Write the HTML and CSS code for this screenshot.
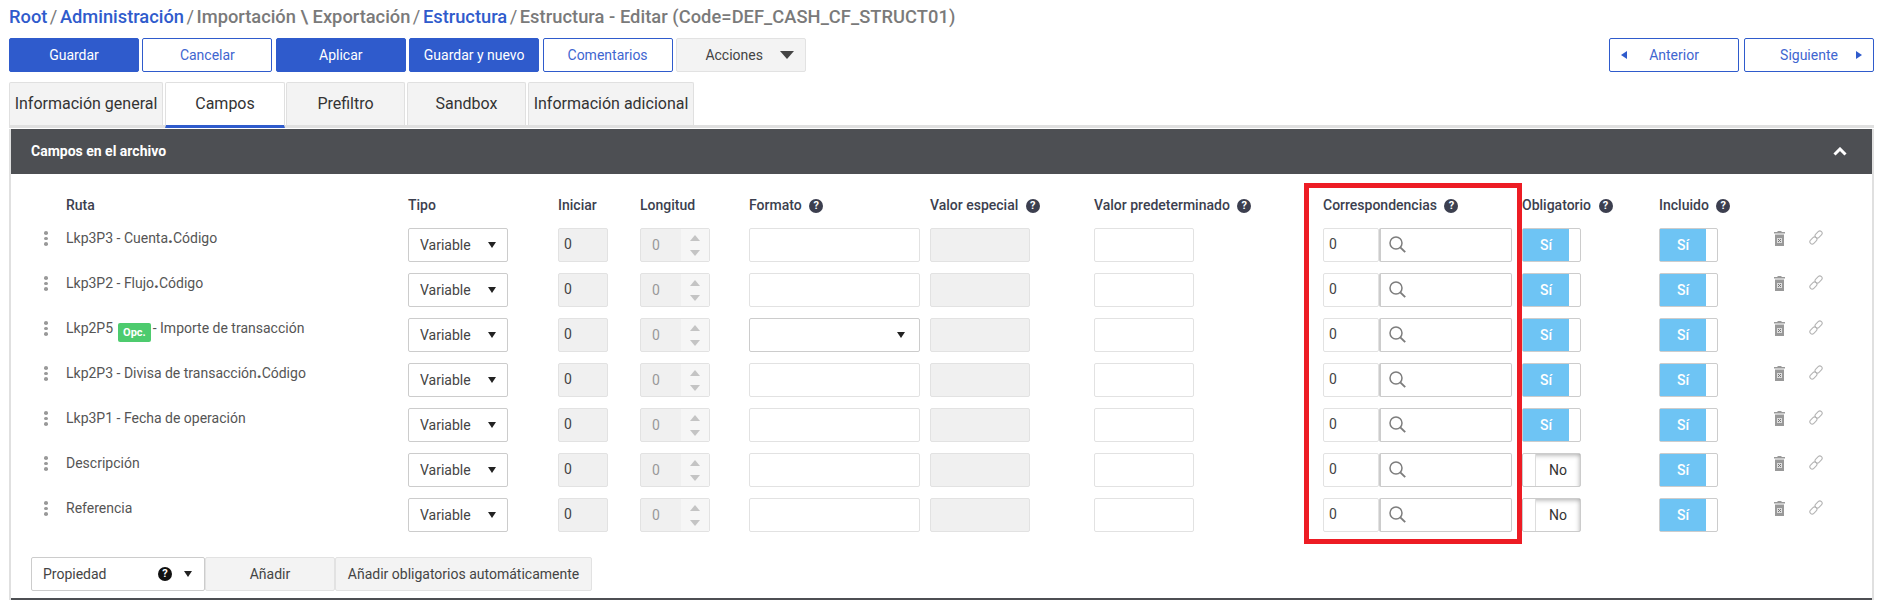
FILE: index.html
```html
<!DOCTYPE html>
<html lang="es">
<head>
    <meta charset="UTF-8">
    <title>Estructura - Editar</title>
    <link rel="stylesheet" href="styles.css">
</head>
<body>
    <svg class="defs" width="0" height="0">
        <symbol id="i-search" viewBox="0 0 17 17">
            <circle cx="7" cy="7" r="6" fill="none" stroke="#7d7d7d" stroke-width="1.5"/>
            <path d="M11.3 11.3 L16.2 16.2" stroke="#7d7d7d" stroke-width="1.9" fill="none"/>
        </symbol>
        <symbol id="i-trash" viewBox="0 0 11 15">
            <path d="M3.5 0h4v1h3.5v1.5h-11v-1.5h3.5z" fill="#999"/>
            <path d="M1 3.5h9v11.5h-9z" fill="#999"/>
            <path d="M3 7h5v5h-5z" fill="#ddd"/>
            <path d="M4 8l3 3M7 8l-3 3" stroke="#777" stroke-width="1" fill="none"/>
        </symbol>
        <symbol id="i-link" viewBox="0 0 14 15">
            <rect x="5.6" y="2.2" width="8" height="4.6" rx="2.3" transform="rotate(-45 9.6 4.5)" fill="none" stroke="#b5b5b5" stroke-width="1.1"/>
            <rect x="0.4" y="8.2" width="8" height="4.6" rx="2.3" transform="rotate(-45 4.4 10.5)" fill="none" stroke="#b5b5b5" stroke-width="1.1"/>
        </symbol>
    </svg>

    <div class="page">
        <div class="crumbs">
            <a>Root</a><i>/</i><a>Administración</a><i>/</i>Importación \ Exportación<i>/</i><a>Estructura</a><i>/</i><span class="current">Estructura - Editar (Code=DEF_CASH_CF_STRUCT01)</span>
        </div>

        <div class="toolbar">
            <button class="btn primary">Guardar</button>
            <button class="btn outline">Cancelar</button>
            <button class="btn primary">Aplicar</button>
            <button class="btn primary">Guardar y nuevo</button>
            <button class="btn outline">Comentarios</button>
            <button class="btn plain">Acciones <span class="arrow-big"></span></button>
            <button class="btn outline pager push"><span class="arrow-left"></span>Anterior</button>
            <button class="btn outline pager">Siguiente<span class="arrow-right"></span></button>
        </div>

        <div class="tabs">
            <div class="tab wide">Información general</div>
            <div class="tab active">Campos</div>
            <div class="tab">Prefiltro</div>
            <div class="tab">Sandbox</div>
            <div class="tab extra">Información adicional</div>
        </div>

        <div class="panel">
            <div class="panel-head">
                <span>Campos en el archivo</span>
                <svg class="chevron" width="14" height="9" viewBox="0 0 14 9"><path d="M1.5 7.5L7 2l5.5 5.5" fill="none" stroke="#fff" stroke-width="3"/></svg>
            </div>

            <div class="panel-body">
                <div class="row head-row">
                    <span></span>
                    <span>Ruta</span>
                    <span>Tipo</span>
                    <span>Iniciar</span>
                    <span>Longitud</span>
                    <span>Formato <b class="help">?</b></span>
                    <span>Valor especial <b class="help">?</b></span>
                    <span>Valor predeterminado <b class="help">?</b></span>
                    <span>Correspondencias <b class="help">?</b></span>
                    <span>Obligatorio <b class="help">?</b></span>
                    <span>Incluido <b class="help">?</b></span>
                    <span></span>
                </div>

                <div class="row">
                    <div class="dots"><u></u><u></u><u></u></div>
                    <div class="path">Lkp3P3 - Cuenta<strong>.</strong>Código</div>
                    <div class="select tipo">Variable<em></em></div>
                    <div class="box off start">0</div>
                    <div class="spin"><span>0</span><div class="spin-btns"><em></em><em></em></div></div>
                    <div class="box format"></div>
                    <div class="box off w100"></div>
                    <div class="box w100"></div>
                    <div class="match"><div class="box num">0</div><div class="lookup"><svg width="17" height="17"><use href="#i-search"/></svg></div></div>
                    <div class="toggle"><span class="yes">Sí</span></div>
                    <div class="toggle"><span class="yes">Sí</span></div>
                    <div class="acts"><svg width="11" height="15"><use href="#i-trash"/></svg><svg width="14" height="15"><use href="#i-link"/></svg></div>
                </div>

                <div class="row">
                    <div class="dots"><u></u><u></u><u></u></div>
                    <div class="path">Lkp3P2 - Flujo<strong>.</strong>Código</div>
                    <div class="select tipo">Variable<em></em></div>
                    <div class="box off start">0</div>
                    <div class="spin"><span>0</span><div class="spin-btns"><em></em><em></em></div></div>
                    <div class="box format"></div>
                    <div class="box off w100"></div>
                    <div class="box w100"></div>
                    <div class="match"><div class="box num">0</div><div class="lookup"><svg width="17" height="17"><use href="#i-search"/></svg></div></div>
                    <div class="toggle"><span class="yes">Sí</span></div>
                    <div class="toggle"><span class="yes">Sí</span></div>
                    <div class="acts"><svg width="11" height="15"><use href="#i-trash"/></svg><svg width="14" height="15"><use href="#i-link"/></svg></div>
                </div>

                <div class="row">
                    <div class="dots"><u></u><u></u><u></u></div>
                    <div class="path">Lkp2P5 <span class="badge">Opc.</span> - Importe de transacción</div>
                    <div class="select tipo">Variable<em></em></div>
                    <div class="box off start">0</div>
                    <div class="spin"><span>0</span><div class="spin-btns"><em></em><em></em></div></div>
                    <div class="select format"><em></em></div>
                    <div class="box off w100"></div>
                    <div class="box w100"></div>
                    <div class="match"><div class="box num">0</div><div class="lookup"><svg width="17" height="17"><use href="#i-search"/></svg></div></div>
                    <div class="toggle"><span class="yes">Sí</span></div>
                    <div class="toggle"><span class="yes">Sí</span></div>
                    <div class="acts"><svg width="11" height="15"><use href="#i-trash"/></svg><svg width="14" height="15"><use href="#i-link"/></svg></div>
                </div>

                <div class="row">
                    <div class="dots"><u></u><u></u><u></u></div>
                    <div class="path">Lkp2P3 - Divisa de transacción<strong>.</strong>Código</div>
                    <div class="select tipo">Variable<em></em></div>
                    <div class="box off start">0</div>
                    <div class="spin"><span>0</span><div class="spin-btns"><em></em><em></em></div></div>
                    <div class="box format"></div>
                    <div class="box off w100"></div>
                    <div class="box w100"></div>
                    <div class="match"><div class="box num">0</div><div class="lookup"><svg width="17" height="17"><use href="#i-search"/></svg></div></div>
                    <div class="toggle"><span class="yes">Sí</span></div>
                    <div class="toggle"><span class="yes">Sí</span></div>
                    <div class="acts"><svg width="11" height="15"><use href="#i-trash"/></svg><svg width="14" height="15"><use href="#i-link"/></svg></div>
                </div>

                <div class="row">
                    <div class="dots"><u></u><u></u><u></u></div>
                    <div class="path">Lkp3P1 - Fecha de operación</div>
                    <div class="select tipo">Variable<em></em></div>
                    <div class="box off start">0</div>
                    <div class="spin"><span>0</span><div class="spin-btns"><em></em><em></em></div></div>
                    <div class="box format"></div>
                    <div class="box off w100"></div>
                    <div class="box w100"></div>
                    <div class="match"><div class="box num">0</div><div class="lookup"><svg width="17" height="17"><use href="#i-search"/></svg></div></div>
                    <div class="toggle"><span class="yes">Sí</span></div>
                    <div class="toggle"><span class="yes">Sí</span></div>
                    <div class="acts"><svg width="11" height="15"><use href="#i-trash"/></svg><svg width="14" height="15"><use href="#i-link"/></svg></div>
                </div>

                <div class="row">
                    <div class="dots"><u></u><u></u><u></u></div>
                    <div class="path">Descripción</div>
                    <div class="select tipo">Variable<em></em></div>
                    <div class="box off start">0</div>
                    <div class="spin"><span>0</span><div class="spin-btns"><em></em><em></em></div></div>
                    <div class="box format"></div>
                    <div class="box off w100"></div>
                    <div class="box w100"></div>
                    <div class="match"><div class="box num">0</div><div class="lookup"><svg width="17" height="17"><use href="#i-search"/></svg></div></div>
                    <div class="toggle"><span class="stub"></span><span class="no">No</span></div>
                    <div class="toggle"><span class="yes">Sí</span></div>
                    <div class="acts"><svg width="11" height="15"><use href="#i-trash"/></svg><svg width="14" height="15"><use href="#i-link"/></svg></div>
                </div>

                <div class="row">
                    <div class="dots"><u></u><u></u><u></u></div>
                    <div class="path">Referencia</div>
                    <div class="select tipo">Variable<em></em></div>
                    <div class="box off start">0</div>
                    <div class="spin"><span>0</span><div class="spin-btns"><em></em><em></em></div></div>
                    <div class="box format"></div>
                    <div class="box off w100"></div>
                    <div class="box w100"></div>
                    <div class="match"><div class="box num">0</div><div class="lookup"><svg width="17" height="17"><use href="#i-search"/></svg></div></div>
                    <div class="toggle"><span class="stub"></span><span class="no">No</span></div>
                    <div class="toggle"><span class="yes">Sí</span></div>
                    <div class="acts"><svg width="11" height="15"><use href="#i-trash"/></svg><svg width="14" height="15"><use href="#i-link"/></svg></div>
                </div>

                <div class="add-bar">
                    <div class="select prop">Propiedad<b class="help black">?</b><em></em></div>
                    <button class="add one">Añadir</button>
                    <button class="add two">Añadir obligatorios automáticamente</button>
                </div>

                <div class="red-box"></div>
            </div>
            <div class="next-head"></div>
        </div>
    </div>
</body>
</html>
```

FILE: styles.css
```css
html, body { margin: 0; height: 600px; overflow: hidden; background: #fff; }
body { font-family: Roboto, "Liberation Sans", sans-serif; font-size: 14px; color: #333; }
.defs { position: absolute; }
.page { padding: 5px 10px 0 9px; }

/* breadcrumb */
.crumbs { height: 24px; line-height: 24px; font-size: 18.3px; font-weight: 500; color: #7a7a7a; white-space: nowrap; }
.crumbs a { color: #2f5bcc; }
.crumbs i { font-style: normal; font-weight: 400; margin: 0 2.5px; }
.crumbs .current { letter-spacing: 0.05px; }

/* top buttons */
.toolbar { display: flex; gap: 3.4px; margin-top: 9px; }
.btn { width: 130px; height: 34px; border-radius: 2px; font-family: inherit; font-size: 14px; padding: 0; display: flex; align-items: center; justify-content: center; }
.primary { background: #2f5bcc; border: 1px solid #2f5bcc; color: #fff; }
.outline { background: #fff; border: 1px solid #2f5bcc; color: #3f66d0; }
.plain { background: #f3f3f3; border: 1px solid #e2e2e2; color: #444; gap: 17px; justify-content: flex-end; padding-right: 11px; }
.arrow-big { border-left: 7px solid transparent; border-right: 7px solid transparent; border-top: 8px solid #444; }
.pager { position: relative; }
.push { margin-left: auto; margin-right: 1.6px; }
.arrow-left, .arrow-right { position: absolute; top: 12px; border-top: 4px solid transparent; border-bottom: 4px solid transparent; }
.arrow-left { left: 11px; border-right: 6px solid #2f5bcc; }
.arrow-right { right: 11px; border-left: 6px solid #2f5bcc; }

/* tabs */
.tabs { display: flex; gap: 2px; margin-top: 10px; border-bottom: 3px solid #e0e0e0; height: 43px; }
.tab { width: 119px; height: 43px; box-sizing: border-box; padding-bottom: 2px; background: #f3f3f3; border: 1px solid #e0e0e0; border-bottom: none; border-radius: 2px 2px 0 0; font-size: 16px; display: flex; align-items: center; justify-content: center; white-space: nowrap; }
.tab.wide { width: 154px; }
.tab.extra { width: 166px; }
.tab.active { width: 120px; height: 46px; margin-right: -1px; background: #fff; border-bottom: 3px solid #2f5bcc; }

/* panel */
.panel { border-left: 2px solid #e0e0e0; border-right: 2px solid #e0e0e0; }
.panel-head { height: 45px; box-sizing: border-box; margin-top: 1px; background: #4d4f53; color: #fff; font-size: 14px; font-weight: 700; display: flex; align-items: center; justify-content: space-between; padding: 0 25px 1px 20px; }
.panel-body { position: relative; height: 424px; box-sizing: border-box; padding: 19px 0 0 29px; }
.next-head { height: 2px; background: #4d4f53; }

/* table rows */
.row { display: grid; grid-template-columns: 26px 342px 150px 82px 109px 181px 164px 229px 199px 137px 110px 1fr; height: 34px; margin-bottom: 11px; }
.head-row { height: 24px; align-items: center; font-size: 14px; font-weight: 500; color: #3c3f4f; white-space: nowrap; }
.help { display: inline-block; width: 14px; height: 14px; line-height: 14px; margin-left: 4px; border-radius: 50%; background: #3c3f4f; color: #fff; font-size: 11px; font-weight: 700; text-align: center; vertical-align: 1px; }
.help.black { background: #111; margin-left: auto; margin-right: 12px; }

.dots { display: flex; flex-direction: column; gap: 2px; padding: 3px 0 0 4px; }
.dots u { display: block; width: 4px; height: 3.5px; border-radius: 50%; background: #999; }
.path { font-size: 14px; color: #555; padding-top: 1px; line-height: 18px; white-space: nowrap; }
.path strong { font-weight: 900; font-size: 16px; line-height: 1; }
.badge { display: inline-block; height: 19px; line-height: 19px; padding: 0 5.5px; margin: 0 -2px 0 1px; border-radius: 2px; background: #4dcb6e; color: #fff; font-size: 11px; font-weight: 700; vertical-align: -3px; }

.box, .select, .spin, .lookup, .toggle, .add { box-sizing: border-box; height: 34px; border-radius: 2px; }
.box { border: 1px solid #e2e2e2; background: #fff; line-height: 30px; padding-left: 5px; font-size: 14px; color: #444; }
.box.off { background: #f0f0f0; }
.start { width: 50px; }
.w100 { width: 100px; }
.format { width: 171px; }

.select { display: flex; align-items: center; background: #fff; border: 1px solid #ccc; padding-left: 11px; font-size: 14px; color: #444; }
.select em { margin-left: auto; margin-right: 11px; border-left: 4px solid transparent; border-right: 4px solid transparent; border-top: 6px solid #222; }
.tipo { width: 100px; }
.select.format em { margin-right: 14px; }

.spin { width: 70px; display: flex; background: #f0f0f0; border: 1px solid #e2e2e2; color: #999; line-height: 32px; }
.spin span { flex: 1; padding-left: 11px; }
.spin-btns { width: 28px; background: #f6f6f6; display: flex; flex-direction: column; justify-content: center; align-items: center; gap: 9px; }
.spin-btns em { border-left: 5px solid transparent; border-right: 5px solid transparent; border-bottom: 6px solid #c4c4c4; }
.spin-btns em + em { border-bottom: none; border-top: 6px solid #c4c4c4; }

.match { display: flex; }
.num { width: 56px; }
.lookup { width: 133px; background: #fff; border: 1px solid #ccc; border-left-width: 2px; display: flex; align-items: center; padding: 0 0 2px 8px; }

.toggle { width: 59px; display: flex; border: 1px solid #ccc; background: #fff; font-size: 14px; }
.yes { width: 46px; background: #6ec4f4; color: #fff; line-height: 32px; text-align: center; font-weight: 500; }
.stub { width: 12px; border-right: 1px solid #ddd; }
.no { flex: 1; line-height: 32px; text-align: center; color: #333; box-shadow: inset -3px 4px 5px -3px #aaa; }

.acts { display: flex; gap: 23px; padding: 3px 0 0 6px; align-items: flex-start; }
.acts svg { display: block; }
.acts svg:first-child { margin-left: -1px; }
.acts svg + svg { margin-left: 1px; margin-top: -1px; }

/* bottom add bar */
.add-bar { display: flex; margin: 25px 0 0 -9px; }
.prop { width: 174px; }
.prop em { margin-left: 0; margin-right: 12px; }
.add { background: #f3f3f3; border: 1px solid #e2e2e2; font-family: inherit; font-size: 14px; color: #444; padding: 0; }
.one { width: 130px; }
.two { width: 257px; }

/* highlight drawn over the screenshot */
.red-box { position: absolute; left: 1293px; top: 9px; width: 218px; height: 361px; box-sizing: border-box; border: 5px solid #ed1c24; pointer-events: none; }
```
